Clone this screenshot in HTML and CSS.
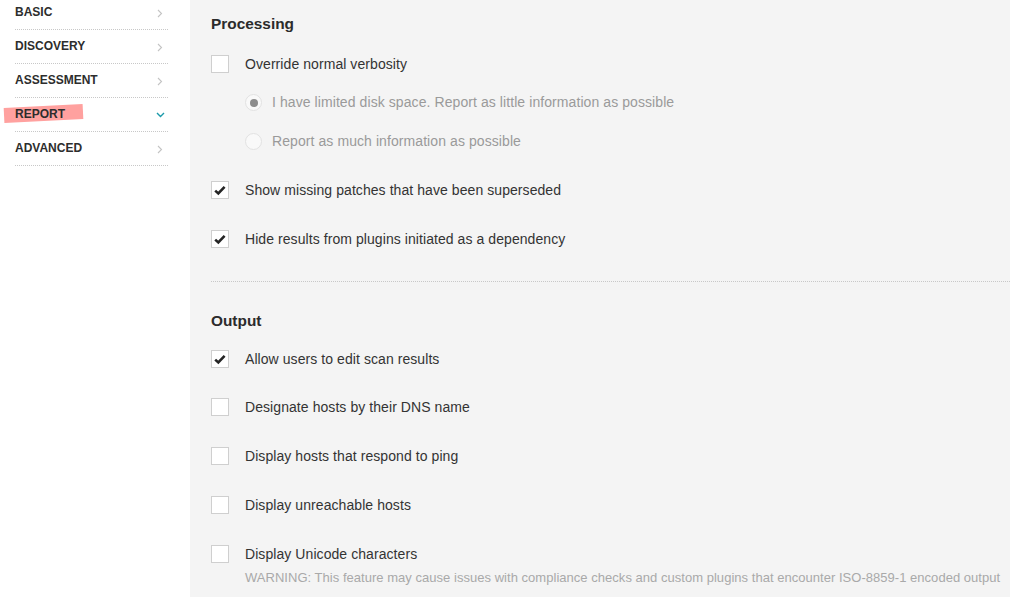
FILE: index.html
```html
<!DOCTYPE html>
<html lang="en">
<head>
<meta charset="utf-8">
<title>Scan settings – Report</title>
<link rel="stylesheet" href="styles.css">
</head>
<body>
<div class="page">
  <nav class="sidebar">
    <ul class="nav-list">
      <li class="nav-item"><span class="nav-label">BASIC</span><svg class="chev" viewBox="0 0 6 9" width="6" height="9"><polyline points="1,1 4.5,4.5 1,8"/></svg></li>
      <li class="nav-item"><span class="nav-label">DISCOVERY</span><svg class="chev" viewBox="0 0 6 9" width="6" height="9"><polyline points="1,1 4.5,4.5 1,8"/></svg></li>
      <li class="nav-item"><span class="nav-label">ASSESSMENT</span><svg class="chev" viewBox="0 0 6 9" width="6" height="9"><polyline points="1,1 4.5,4.5 1,8"/></svg></li>
      <li class="nav-item nav-item-active"><span class="nav-label nav-label-marked">REPORT</span><svg class="chev chev-down" viewBox="0 0 9 6" width="9" height="6"><polyline points="1,1 4.5,4.5 8,1"/></svg></li>
      <li class="nav-item"><span class="nav-label">ADVANCED</span><svg class="chev" viewBox="0 0 6 9" width="6" height="9"><polyline points="1,1 4.5,4.5 1,8"/></svg></li>
    </ul>
  </nav>

  <main class="content">
    <section class="section section-processing">
      <h2 class="section-title">Processing</h2>

      <div class="option">
        <span class="checkbox"></span>
        <div class="option-body"><span class="option-label">Override normal verbosity</span></div>
      </div>

      <div class="radio-group">
        <div class="radio-option">
          <span class="radio radio-checked"></span>
          <span class="radio-label">I have limited disk space. Report as little information as possible</span>
        </div>
        <div class="radio-option">
          <span class="radio"></span>
          <span class="radio-label">Report as much information as possible</span>
        </div>
      </div>

      <div class="option">
        <span class="checkbox"><svg class="check" viewBox="0 0 16 16" width="16" height="16"><path d="M3.2 8.6 L6.3 11.4 L12.6 4.9"/></svg></span>
        <div class="option-body"><span class="option-label">Show missing patches that have been superseded</span></div>
      </div>

      <div class="option">
        <span class="checkbox"><svg class="check" viewBox="0 0 16 16" width="16" height="16"><path d="M3.2 8.6 L6.3 11.4 L12.6 4.9"/></svg></span>
        <div class="option-body"><span class="option-label">Hide results from plugins initiated as a dependency</span></div>
      </div>
    </section>

    <section class="section section-output">
      <h2 class="section-title">Output</h2>

      <div class="option">
        <span class="checkbox"><svg class="check" viewBox="0 0 16 16" width="16" height="16"><path d="M3.2 8.6 L6.3 11.4 L12.6 4.9"/></svg></span>
        <div class="option-body"><span class="option-label">Allow users to edit scan results</span></div>
      </div>

      <div class="option">
        <span class="checkbox"></span>
        <div class="option-body"><span class="option-label">Designate hosts by their DNS name</span></div>
      </div>

      <div class="option">
        <span class="checkbox"></span>
        <div class="option-body"><span class="option-label">Display hosts that respond to ping</span></div>
      </div>

      <div class="option">
        <span class="checkbox"></span>
        <div class="option-body"><span class="option-label">Display unreachable hosts</span></div>
      </div>

      <div class="option">
        <span class="checkbox"></span>
        <div class="option-body">
          <span class="option-label">Display Unicode characters</span>
          <p class="option-note">WARNING: This feature may cause issues with compliance checks and custom plugins that encounter ISO-8859-1 encoded output</p>
        </div>
      </div>
    </section>
  </main>
</div>
</body>
</html>
```

FILE: styles.css
```css
html, body {
  margin: 0;
  padding: 0;
}

body {
  font-family: "Liberation Sans", Arial, sans-serif;
  color: #333;
  background: #f4f4f4;
}

.page {
  display: flex;
  width: 1010px;
  height: 597px;
  overflow: hidden;
}

/* ---------- Sidebar ---------- */
.sidebar {
  width: 190px;
  flex: 0 0 190px;
  box-sizing: border-box;
  background: #fff;
  padding: 0 22px 0 15px;
}

.nav-list {
  list-style: none;
  margin: -4px 0 0;
  padding: 0;
}

.nav-item {
  display: flex;
  align-items: center;
  justify-content: space-between;
  height: 33px;
  box-sizing: content-box;
  padding-right: 5px;
  border-bottom: 1px dotted #c8c8c8;
}

.nav-label {
  position: relative;
  z-index: 1;
  font-size: 12px;
  font-weight: bold;
  color: #2d2d2d;
  line-height: 14px;
  margin-bottom: 2px;
}

.nav-label-marked::before {
  content: "";
  position: absolute;
  left: -11px;
  right: -18px;
  top: -1px;
  height: 15px;
  background: #ffa19f;
  transform: rotate(-2.8deg);
  z-index: -1;
}

.chev {
  display: block;
  fill: none;
  stroke: #c4c4c4;
  stroke-width: 1.1;
  margin-top: 1px;
}

.chev-down {
  stroke: #1b9aaa;
  stroke-width: 1.4;
  margin-right: -2px;
}

/* ---------- Content ---------- */
.content {
  flex: 1;
  background: #f4f4f4;
  padding-left: 21px;
}

.section-processing {
  padding-bottom: 33px;
  border-bottom: 1px dotted #c8c8c8;
}

.section-output {
  padding-top: 29px;
}

.section-title {
  margin: 0 0 20px;
  font-size: 15.4px;
  line-height: 20px;
  font-weight: bold;
  color: #2b2b2b;
}

.section-processing .section-title {
  margin-top: 14px;
  margin-bottom: 21px;
}

.section-output .section-title {
  margin-top: 0;
  margin-bottom: 19px;
}

.option {
  display: flex;
  align-items: flex-start;
  gap: 16px;
}

.option + .option,
.radio-group + .option {
  margin-top: 30.8px;
}

.checkbox {
  flex: 0 0 auto;
  display: flex;
  align-items: center;
  justify-content: center;
  width: 18px;
  height: 18px;
  box-sizing: border-box;
  border: 1px solid #cfcfcf;
  background: #fff;
}

.check {
  display: block;
  fill: none;
  stroke: #242424;
  stroke-width: 2.6;
  stroke-linecap: butt;
  stroke-linejoin: miter;
}

.option-body {
  display: flex;
  flex-direction: column;
}

.option-label {
  font-size: 14px;
  line-height: 18px;
  letter-spacing: 0.07px;
  color: #333;
}

.option-note {
  margin: 6px 0 0;
  font-size: 13px;
  line-height: 17px;
  letter-spacing: 0.03px;
  color: #a9a9a9;
  white-space: nowrap;
}

.radio-group {
  display: flex;
  flex-direction: column;
  gap: 22px;
  margin-top: 21px;
  padding-left: 34px;
}

.radio-option {
  display: flex;
  align-items: center;
  gap: 10px;
  height: 17px;
}

.radio {
  flex: 0 0 auto;
  position: relative;
  width: 17px;
  height: 17px;
  box-sizing: border-box;
  border: 1px solid #e2e2e2;
  border-radius: 50%;
  background: #f9f9f9;
}

.radio-checked::after {
  content: "";
  position: absolute;
  left: 3.5px;
  top: 3.5px;
  width: 8px;
  height: 8px;
  border-radius: 50%;
  background: #8c8c8c;
}

.radio-label {
  font-size: 14px;
  line-height: 17px;
  letter-spacing: 0.08px;
  color: #9a9a9a;
}
```
